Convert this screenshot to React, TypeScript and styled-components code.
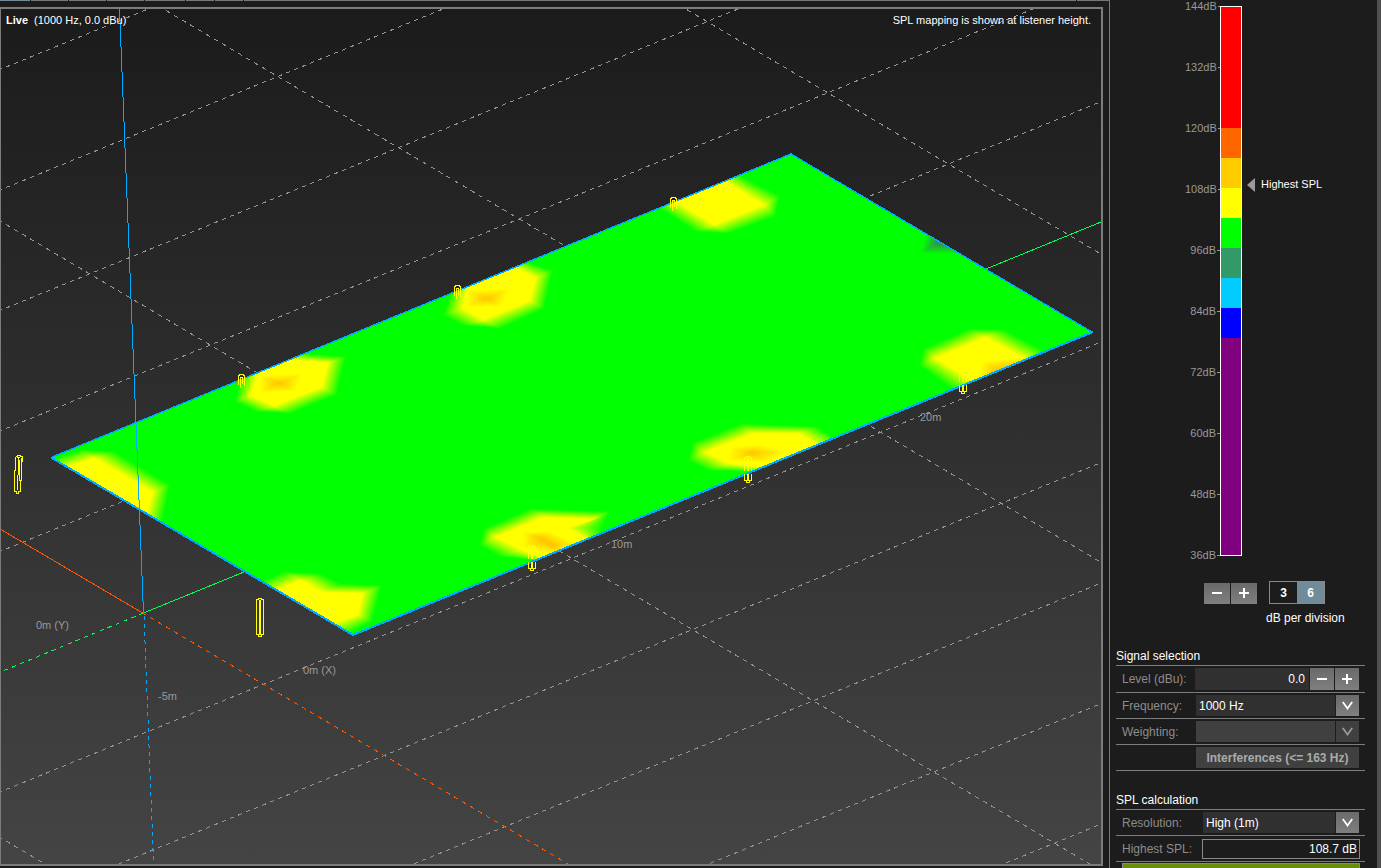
import React from 'react';
import styled, { createGlobalStyle } from 'styled-components';

const GlobalStyle = createGlobalStyle`
  * { box-sizing: border-box; }
  html, body, #root { height: 100%; }
  body {
    margin: 0;
    background: #1c1c1c;
    color: #fff;
    font-family: "Liberation Sans", Arial, sans-serif;
    font-size: 12px;
    line-height: 14px;
    overflow: hidden;
  }
  button, input, select { font: inherit; color: inherit; border: 0; margin: 0; padding: 0; border-radius: 0; }
`;

const Page = styled.div`
  display: flex;
  height: 100%;
`;

const Main = styled.main`
  flex: 1;
  min-width: 0;
  display: flex;
  flex-direction: column;
  padding: 0 6px 2px 0;
`;

const TabEdge = styled.div`
  display: flex;
  gap: 1px;
  height: 1px;
  margin: 0 -6px 6px 0;
`;

const TabEdgePart = styled.span<{ $width?: number; $active?: boolean }>`
  flex: ${(p) => (p.$width ? `0 0 ${p.$width}px` : '1')};
  background: ${(p) => (p.$active ? '#718b9a' : '#777')};
`;

const Viewport = styled.section`
  position: relative;
  flex: 1;
  min-height: 0;
  border: 2px solid #7c7c7c;
  border-left-width: 1px;
  background: linear-gradient(#1b1b1b, #444);
`;

const Scene = styled.svg`
  display: block;
  width: 100%;
  height: 100%;
`;

const Axis = styled.text`
  font-size: 11px;
  fill: #999;
`;

const Overlay = styled.div`
  position: absolute;
  top: 4px;
  left: 5px;
  right: 10px;
  display: flex;
  justify-content: space-between;
  font-size: 11px;
`;

const Mode = styled.strong`
  margin-right: 6px;
`;

const Sidebar = styled.aside`
  flex: 0 0 272px;
  border-left: 1px solid #777;
  border-right: 4px solid #505050;
  padding: 0 12px 0 6px;
  overflow: hidden;
`;

const Scale = styled.div`
  display: flex;
  margin-left: 69px;
  font-size: 11px;
`;

const Ticks = styled.ul`
  list-style: none;
  margin: 0;
  padding: 0;
  width: 35px;
  display: flex;
  flex-direction: column;
  gap: 48px;
`;

const Tick = styled.li`
  display: flex;
  align-items: center;
  justify-content: flex-end;
  gap: 1px;
  line-height: 13px;
  color: #999;
  &::after {
    content: '';
    width: 3px;
    height: 1px;
    background: #999;
  }
`;

const Bar = styled.div`
  width: 22px;
  height: 550px;
  margin-top: 6px;
  border: 1px solid #fff;
  display: flex;
  flex-direction: column;
`;

const Band = styled.span<{ $color: string; $size: number }>`
  height: ${(p) => p.$size}px;
  background: ${(p) => p.$color};
`;

const Peak = styled.div`
  display: flex;
  gap: 6px;
  height: 14px;
  margin: 178px 0 0 5px;
  line-height: 13px;
`;

const ScaleControls = styled.div`
  display: flex;
  gap: 12px;
  margin: 19px 0 7px 88px;
  align-items: center;
`;

const Pair = styled.div`
  display: flex;
  gap: 1px;
`;

const ScalePair = styled(Pair)`
  padding-top: 1px;
`;

const StepButton = styled.button<{ $width: number; $tall?: boolean }>`
  display: flex;
  align-items: flex-start;
  justify-content: center;
  width: ${(p) => p.$width}px;
  height: ${(p) => (p.$tall ? 22 : 21)}px;
  padding-top: ${(p) => (p.$tall ? 6 : 5)}px;
  background: linear-gradient(#6a6a6a, #7f7f7f);
`;

const Segmented = styled.div`
  display: flex;
  border: 1px solid #888;
`;

const Segment = styled.button<{ $active?: boolean }>`
  width: 27px;
  height: 21px;
  font-weight: bold;
  background: ${(p) => (p.$active ? '#718b9a' : 'transparent')};
`;

const ScaleCaption = styled.div`
  margin-left: 150px;
`;

const Group = styled.section<{ $gap: number }>`
  margin-top: ${(p) => p.$gap}px;
`;

const GroupTitle = styled.h2`
  margin: 0;
  font-size: 12px;
  font-weight: normal;
  line-height: 14px;
  padding-bottom: 2px;
  border-bottom: 1px solid #7c7c7c;
`;

const Row = styled.div`
  display: flex;
  align-items: center;
  height: 26px;
  padding: 0 6px;
  border-bottom: 1px solid #7c7c7c;
`;

const TallRow = styled(Row)`
  height: 27px;
`;

const ResultRow = styled(Row)`
  padding-right: 5px;
`;

const Label = styled.label<{ $width?: number }>`
  flex: 0 0 ${(p) => p.$width ?? 74}px;
  color: #8c8c8c;
`;

const LevelInput = styled.input`
  flex: 1;
  min-width: 0;
  height: 22px;
  margin: 0 1px 0 -1px;
  padding-right: 4px;
  text-align: right;
  background: #303030;
`;

const ResultInput = styled.input`
  flex: 1;
  min-width: 0;
  height: 20px;
  padding-right: 2px;
  text-align: right;
  background: transparent;
  border: 1px solid #888;
`;

const Picker = styled.div`
  position: relative;
  flex: 1;
  height: 21px;
`;

const Select = styled.select<{ $muted?: boolean }>`
  appearance: none;
  width: 100%;
  height: 21px;
  padding: 0 24px 0 3px;
  opacity: 1;
  background: ${(p) => (p.$muted ? '#404040' : '#303030')};
`;

const Chevron = styled.span<{ $muted?: boolean }>`
  position: absolute;
  top: 0;
  right: 0;
  width: 24px;
  height: 21px;
  display: flex;
  align-items: center;
  justify-content: center;
  pointer-events: none;
  border-left: 1px solid #1c1c1c;
  color: ${(p) => (p.$muted ? '#999' : '#fff')};
  background: ${(p) => (p.$muted ? '#404040' : 'linear-gradient(#6a6a6a, #7f7f7f)')};
`;

const WideButton = styled.button`
  flex: 1;
  height: 21px;
  margin-left: 74px;
  font-weight: bold;
  color: #aaa;
  background: #404040;
`;

const Calculate = styled.button`
  display: block;
  width: calc(100% - 11px);
  height: 24px;
  margin: 1px 5px 0 6px;
  border: 1px solid #888;
  background: #698d08;
`;

type Point = [number, number];
type Rgb = [number, number, number];

const GREEN: Rgb = [0, 255, 0];
const YELLOW: Rgb = [255, 255, 0];
const AMBER: Rgb = [255, 200, 0];
const TEAL: Rgb = [48, 150, 80];

interface Patch {
  from: Rgb;
  to: Rgb;
  outer: Point[];
  inner: Point[];
}

const spot = (outer: Point[], inner: Point[]): Patch => ({ from: GREEN, to: YELLOW, outer, inner });
const core = (outer: Point[], inner: Point[]): Patch => ({ from: YELLOW, to: AMBER, outer, inner });

const patches: Patch[] = [
  spot(
    [[52, 458], [80, 449], [115, 451], [171, 484], [163, 525], [100, 510]],
    [[67, 467], [94, 458], [97, 459], [153, 492], [146, 517], [100, 510]],
  ),
  spot(
    [[234, 402], [255, 412], [292, 414], [338, 395], [347, 356], [300, 353], [270, 350], [240, 378]],
    [[250, 396], [274, 406], [274, 406], [322, 387], [328, 363], [290, 359], [268, 360], [257, 376]],
  ),
  core([[259, 375], [304, 373], [296, 392], [259, 393]], [[276, 383], [281, 383], [281, 384], [276, 384]]),
  spot(
    [[442, 316], [462, 326], [502, 329], [545, 309], [554, 270], [527, 261], [480, 262], [448, 297]],
    [[462, 308], [483, 320], [483, 320], [530, 301], [536, 278], [517, 268], [480, 270], [467, 290]],
  ),
  core([[467, 290], [511, 288], [502, 307], [467, 307]], [[484, 298], [489, 298], [489, 299], [484, 299]]),
  spot(
    [[657, 208], [695, 232], [730, 234], [776, 217], [781, 195], [740, 175], [707, 173]],
    [[673, 200], [714, 225], [714, 225], [764, 205], [764, 205], [725, 181], [707, 175]],
  ),
  spot(
    [[918, 366], [923, 348], [968, 328], [1005, 329], [1043, 349], [1040, 372], [985, 400], [947, 387]],
    [[935, 358], [935, 358], [985, 337], [985, 337], [1023, 357], [1030, 375], [985, 400], [973, 381]],
  ),
  core([[982, 361], [1024, 357], [1015, 385], [975, 388]], [[996, 369], [1010, 366], [1008, 374], [996, 374]]),
  spot(
    [[687, 461], [692, 442], [740, 423], [818, 426], [833, 435], [800, 480], [760, 472], [707, 471]],
    [[705, 452], [705, 452], [753, 433], [798, 433], [820, 445], [800, 480], [762, 468], [727, 463]],
  ),
  core([[730, 447], [760, 444], [790, 452], [767, 463], [727, 461]], [[750, 453], [752, 452], [755, 453], [753, 454], [750, 454]]),
  spot(
    [[479, 546], [483, 528], [530, 508], [610, 511], [605, 528], [603, 536], [560, 575], [530, 560], [498, 557]],
    [[495, 537], [495, 537], [543, 517], [595, 519], [568, 528], [586, 538], [560, 575], [537, 556], [522, 550]],
  ),
  core([[522, 532], [550, 531], [577, 543], [560, 556], [522, 548]], [[538, 537], [542, 538], [556, 545], [553, 547], [540, 540]]),
  spot(
    [[260, 581], [283, 571], [322, 573], [342, 583], [383, 585], [373, 622], [353, 633], [300, 640]],
    [[272, 592], [301, 580], [303, 581], [322, 592], [363, 593], [358, 615], [335, 623], [300, 640]],
  ),
  {
    from: GREEN,
    to: TEAL,
    outer: [[926, 230], [920, 254], [962, 254], [952, 235]],
    inner: [[938, 238], [935, 244], [946, 245], [948, 238]],
  },
];

const STEPS = 14;

function HeatPatch({ from, to, outer, inner }: Patch) {
  return (
    <>
      {Array.from({ length: STEPS + 1 }, (_, i) => {
        const t = i / STEPS;
        const points = outer.map(([x, y], n) => [x + (inner[n][0] - x) * t, y + (inner[n][1] - y) * t].join(','));
        const color = from.map((c, n) => Math.round(c + (to[n] - c) * t)).join(',');
        return <polygon key={i} points={points.join(' ')} fill={`rgb(${color})`} />;
      })}
    </>
  );
}

/* Ground grid: two families of parallel lines, given by their height at x = 0. */
const RISE = -0.4086;
const FALL = 0.59;
const risingLines = [69.5, 190, 310.5, 431, 551.5, 792, 912.5, 1033, 1153.5, 1274];
const fallingLines = [-395.6, -87.4, 221, 837.4];
const PLANE = '51.5,457.5 791,154 1092.5,332 353,635';

/* Loudspeaker column; breakAt is where the plane's edge hides part of it. */
function Cabinet({ x, top, bottom, breakAt }: { x: number; top: number; bottom: number; breakAt?: number }) {
  const spans = breakAt ? [[top + 2, breakAt - 3], [breakAt, bottom - 1]] : [[top + 2, bottom - 1]];
  return (
    <>
      <path d={`M${x + 0.5} ${top + 2.5}V${top + 1.5}H${x + 2.5}V${top + 0.5}H${x + 5.5}V${top + 1.5}H${x + 7.5}V${top + 2.5}`} />
      <path d={`M${x + 0.5} ${bottom - 1.5}H${x + 2.5}V${bottom + 0.5}H${x + 5.5}V${bottom - 1.5}H${x + 7.5}`} />
      {spans.map(([a, b]) => (
        <React.Fragment key={a}>
          <path d={`M${x + 0.5} ${a}V${b}M${x + 7.5} ${a}V${b}`} />
          <path d={`M${x + 4} ${a}V${b}`} strokeWidth="2" />
        </React.Fragment>
      ))}
    </>
  );
}

/* Top of a loudspeaker column that stands behind the plane. */
function Hook({ x, y }: { x: number; y: number }) {
  return (
    <path
      d={
        `M${x + 0.5} ${y + 11}V${y + 1.5}H${x + 1.5}V${y + 0.5}H${x + 5.5}V${y + 1.5}H${x + 6.5}V${y + 12}` +
        `M${x + 2.5} ${y + 14}V${y + 3.5}H${x + 4.5}V${y + 10}`
      }
    />
  );
}

function SplMap() {
  return (
    <Scene viewBox="1 9 1100 855" preserveAspectRatio="xMidYMid slice" role="img" aria-label="SPL map">
      <defs>
        <clipPath id="plane"><polygon points={PLANE} /></clipPath>
      </defs>
      <g shapeRendering="crispEdges" fill="none" strokeWidth="1">
        <g stroke="#949494">
          {risingLines.map((y) => (
            <line key={y} x1={0} y1={y} x2={1101} y2={y + RISE * 1101} strokeDasharray="4.3 4.34" strokeDashoffset="2.2" />
          ))}
          {fallingLines.map((y) => (
            <line key={y} x1={0} y1={y} x2={1101} y2={y + FALL * 1101} strokeDasharray="4.6 4.7" strokeDashoffset="2.3" />
          ))}
        </g>
        <line x1={143.5} y1={613} x2={1101} y2={222} stroke="#00ff55" />
        <line x1={143.5} y1={613} x2={4} y2={670.5} stroke="#00ff55" strokeDasharray="4.3 4.34" />
        <line x1={0} y1={529} x2={143.5} y2={613.5} stroke="#ff5500" />
        <line x1={143.5} y1={613.5} x2={568} y2={864} stroke="#ff5500" strokeDasharray="4.6 4.7" strokeDashoffset="2" />
        <line x1={144} y1={616} x2={153.5} y2={862} stroke="#00aaff" strokeDasharray="4 4" />
      </g>
      <polygon points={PLANE} fill="#0f0" />
      <g clipPath="url(#plane)">
        {patches.map((patch, i) => <HeatPatch key={i} {...patch} />)}
      </g>
      <g shapeRendering="crispEdges" fill="none" stroke="#00aaff">
        <polyline points="51,457.5 791,154 1092,332" strokeWidth="1.4" />
        <polyline points="51,457.5 353,635 1093,332" strokeWidth="2" />
        <line x1={119.5} y1={9} x2={143.5} y2={613} />
      </g>
      <g shapeRendering="crispEdges" fill="none" stroke="#ff0">
        <path d="M15.5 457V470H14.5V491.500H16.500V493H18.500V491.500H20.500V480H21.500V457.500M15.500 456.500H17V455.500H20.500V456.500H22.500V462M18.500 458V475M17.500 475V490M19.500 460V481M16.500 457.500H20" />
        <Cabinet x={256} top={598} bottom={636} />
        <Cabinet x={528} top={545} bottom={570} breakAt={562} />
        <Cabinet x={744} top={456} bottom={482} breakAt={474} />
        <Cabinet x={959} top={369} bottom={393} breakAt={385} />
        <Hook x={238} y={374} />
        <Hook x={454} y={285} />
        <Hook x={670} y={197} />
      </g>
      <Axis x={36} y={629}>0m (Y)</Axis>
      <Axis x={303} y={674}>0m (X)</Axis>
      <Axis x={158} y={700}>-5m</Axis>
      <Axis x={611} y={548}>10m</Axis>
      <Axis x={920} y={421}>20m</Axis>
    </Scene>
  );
}

const tickValues = [144, 132, 120, 108, 96, 84, 72, 60, 48, 36];
const bands: [string, number][] = [
  ['#ff0000', 121], ['#ff6600', 30], ['#ffcc00', 30], ['#ffff00', 30], ['#00ff00', 30],
  ['#339966', 30], ['#00ccff', 30], ['#0000ff', 30], ['#800080', 217],
];

const Minus = () => (
  <svg width="10" height="11" aria-hidden="true"><path d="M0 5H10" stroke="#fff" strokeWidth="2" /></svg>
);
const Plus = () => (
  <svg width="10" height="11" aria-hidden="true"><path d="M0 5H10M5 0V10" stroke="#fff" strokeWidth="2" /></svg>
);
const Down = () => (
  <svg width="11" height="9" aria-hidden="true"><path d="M0.800 1L5.500 7.500L10.200 1" fill="none" stroke="currentColor" strokeWidth="1.800" /></svg>
);

export default function App() {
  return (
    <Page>
      <GlobalStyle />
      <Main>
        <TabEdge>
          <TabEdgePart $width={30} $active />
          {[37, 37, 37, 40, 28, 28].map((w, i) => <TabEdgePart key={i} $width={w} />)}
          <TabEdgePart />
          <TabEdgePart $width={32} />
        </TabEdge>
        <Viewport>
          <SplMap />
          <Overlay>
            <div><Mode>Live</Mode>(1000 Hz, 0.0 dBu)</div>
            <div>SPL mapping is shown at listener height.</div>
          </Overlay>
        </Viewport>
      </Main>
      <Sidebar>
        <Scale>
          <Ticks>{tickValues.map((v) => <Tick key={v}>{v}dB</Tick>)}</Ticks>
          <Bar>{bands.map(([color, size]) => <Band key={color} $color={color} $size={size} />)}</Bar>
          <Peak>
            <svg width="8" height="14" aria-hidden="true"><path d="M8 0V14L0 7Z" fill="#999" /></svg>
            Highest SPL
          </Peak>
        </Scale>
        <ScaleControls>
          <ScalePair>
            <StepButton $width={26} aria-label="Lower scale"><Minus /></StepButton>
            <StepButton $width={26} aria-label="Raise scale"><Plus /></StepButton>
          </ScalePair>
          <Segmented>
            <Segment>3</Segment>
            <Segment $active>6</Segment>
          </Segmented>
        </ScaleControls>
        <ScaleCaption>dB per division</ScaleCaption>
        <Group $gap={24}>
          <GroupTitle>Signal selection</GroupTitle>
          <TallRow>
            <Label htmlFor="level">Level (dBu):</Label>
            <LevelInput id="level" defaultValue="0.0" />
            <Pair>
              <StepButton $width={24} $tall aria-label="Decrease level"><Minus /></StepButton>
              <StepButton $width={24} $tall aria-label="Increase level"><Plus /></StepButton>
            </Pair>
          </TallRow>
          <Row>
            <Label htmlFor="frequency">Frequency:</Label>
            <Picker>
              <Select id="frequency"><option>1000 Hz</option></Select>
              <Chevron><Down /></Chevron>
            </Picker>
          </Row>
          <Row>
            <Label htmlFor="weighting">Weighting:</Label>
            <Picker>
              <Select id="weighting" disabled $muted><option></option></Select>
              <Chevron $muted><Down /></Chevron>
            </Picker>
          </Row>
          <Row>
            <WideButton disabled>Interferences (&lt;= 163 Hz)</WideButton>
          </Row>
        </Group>
        <Group $gap={22}>
          <GroupTitle>SPL calculation</GroupTitle>
          <Row>
            <Label htmlFor="resolution" $width={81}>Resolution:</Label>
            <Picker>
              <Select id="resolution"><option>High (1m)</option></Select>
              <Chevron><Down /></Chevron>
            </Picker>
          </Row>
          <ResultRow>
            <Label htmlFor="highest" $width={80}>Highest SPL:</Label>
            <ResultInput id="highest" readOnly value="108.7 dB" />
          </ResultRow>
          <Calculate aria-label="Calculate" />
        </Group>
      </Sidebar>
    </Page>
  );
}
